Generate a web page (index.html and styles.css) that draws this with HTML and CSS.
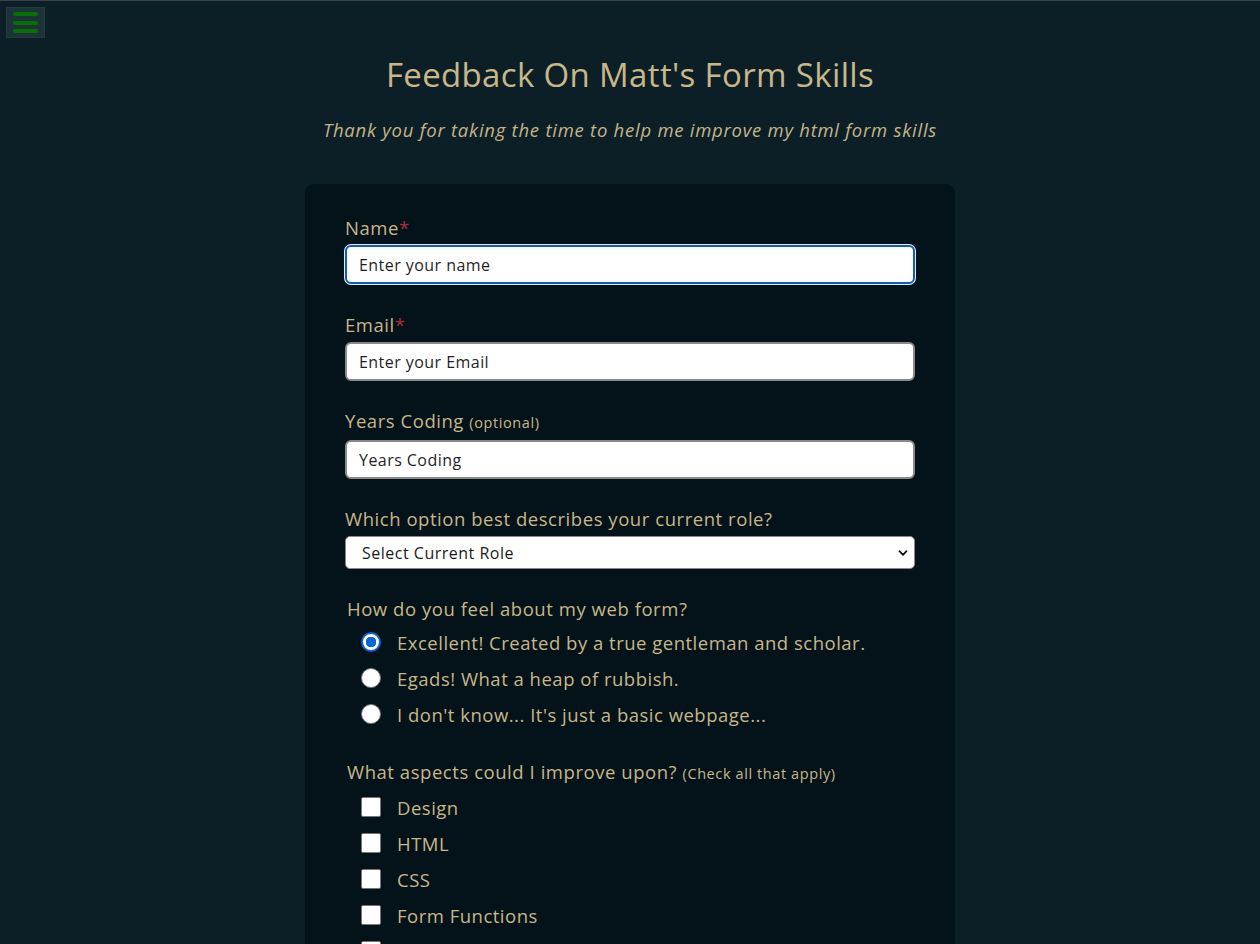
FILE: index.html
```html
<!DOCTYPE html>
<html lang="en">
<head>
<meta charset="utf-8">
<title>Feedback On Matt's Form Skills</title>
<link rel="stylesheet" href="styles.css">
</head>
<body>
<button class="menu-btn" aria-label="Menu">
  <span class="bar"></span><span class="bar"></span><span class="bar"></span>
</button>
<header class="page-head">
  <h1 class="title">Feedback On Matt's Form Skills</h1>
  <p class="subtitle">Thank you for taking the time to help me improve my html form skills</p>
</header>
<main class="card">
  <form class="form">
    <div class="field field-first">
      <label class="label" for="name">Name<span class="req">*</span></label>
      <input class="input input-focus" id="name" type="text" placeholder="Enter your name">
    </div>
    <div class="field">
      <label class="label" for="email">Email<span class="req">*</span></label>
      <input class="input" id="email" type="email" placeholder="Enter your Email">
    </div>
    <div class="field">
      <label class="label" for="years">Years Coding <span class="small">(optional)</span></label>
      <input class="input" id="years" type="number" placeholder="Years Coding">
    </div>
    <div class="field">
      <label class="label" for="role">Which option best describes your current role?</label>
      <div class="select" id="role">
        <span class="select-text">Select Current Role</span>
        <svg class="chev" width="10" height="8" viewBox="0 0 10 8"><path d="M1.5 2.2 L5 5.8 L8.5 2.2" fill="none" stroke="#111" stroke-width="1.8" stroke-linecap="round" stroke-linejoin="round"/></svg>
      </div>
    </div>
    <fieldset class="group">
      <legend class="legend">How do you feel about my web form?</legend>
      <label class="option"><span class="radio radio-on"></span><span class="opt-text">Excellent! Created by a true gentleman and scholar.</span></label>
      <label class="option"><span class="radio"></span><span class="opt-text">Egads! What a heap of rubbish.</span></label>
      <label class="option"><span class="radio"></span><span class="opt-text">I don't know... It's just a basic webpage...</span></label>
    </fieldset>
    <fieldset class="group">
      <legend class="legend">What aspects could I improve upon? <span class="small">(Check all that apply)</span></legend>
      <label class="option"><span class="check"></span><span class="opt-text">Design</span></label>
      <label class="option"><span class="check"></span><span class="opt-text">HTML</span></label>
      <label class="option"><span class="check"></span><span class="opt-text">CSS</span></label>
      <label class="option"><span class="check"></span><span class="opt-text">Form Functions</span></label>
      <label class="option"><span class="check"></span><span class="opt-text">Responsiveness</span></label>
    </fieldset>
  </form>
</main>
</body>
</html>
```

FILE: styles.css
```css
* { box-sizing: border-box; }
html, body { margin: 0; padding: 0; }
body {
  background: #0c1f27;
  border-top: 1px solid #3b4246;
  font-family: "Open Sans", "DejaVu Sans", sans-serif;
  color: #c5b488;
  min-height: 100vh;
}
.menu-btn {
  position: absolute;
  top: 7px;
  left: 6px;
  width: 39px;
  height: 31px;
  background: #1e3339;
  border: 1px solid #26393f;
  padding: 4px 6px;
  display: flex;
  flex-direction: column;
  justify-content: space-between;
  align-items: center;
}
.bar {
  display: block;
  width: 25px;
  height: 4px;
  background: #047304;
  border-radius: 2px;
}
.page-head {
  text-align: center;
  padding-top: 49px;
}
.title {
  margin: 0;
  font-size: 33px;
  letter-spacing: 0.35px;
  font-weight: 500;
  line-height: 50px;
  color: #c8b789;
}
.subtitle {
  margin: 17px 0 0;
  font-size: 18.5px;
  letter-spacing: 0.75px;
  font-style: italic;
  line-height: 26px;
  color: #c5b488;
}
.card {
  width: 650px;
  margin: 41px auto 0;
  background: #04131a;
  border-radius: 9px;
  padding: 30px 40px 40px;
}
.form { display: flex; flex-direction: column; }
.field {
  display: flex;
  flex-direction: column;
  gap: 4px;
  margin-bottom: 26px;
}
.field-first { margin-bottom: 27px; }
.label {
  font-size: 18.5px;
  letter-spacing: 0.55px;
  line-height: 27px;
  color: #c8b789;
}
.req { color: #b02a37; }
.small { font-size: 14.5px; letter-spacing: 0.6px; }
.input {
  height: 39px;
  border: 2px solid #8a8a8a;
  border-radius: 6px;
  background: #fff;
  padding: 0 12px;
  font-family: inherit;
  font-size: 16px;
  letter-spacing: 0.45px;
  color: #1a1a1a;
  outline: none;
}
.input::placeholder { color: #1f1f1f; opacity: 1; }
.input-focus {
  border-color: #0a5cc7;
  box-shadow: 0 0 0 1px #e8eef5;
}
.select {
  height: 33px;
  background: #fff;
  border: 1px solid #8a8a8a;
  border-radius: 5px;
  display: flex;
  align-items: center;
  justify-content: space-between;
  padding: 0 6px 0 16px;
  font-size: 16px;
  letter-spacing: 0.5px;
  color: #1a1a1a;
}
.group {
  border: none;
  margin: 0 0 26px;
  padding: 0 2px;
}
.legend {
  padding: 0;
  font-size: 18.5px;
  letter-spacing: 0.55px;
  line-height: 27px;
  margin-bottom: 2px;
  color: #c8b789;
}
.option {
  display: flex;
  align-items: center;
  height: 36px;
  gap: 16px;
  padding-left: 14px;
  font-size: 18.5px;
  letter-spacing: 0.5px;
  color: #c8b789;
}
.radio {
  width: 20px;
  height: 20px;
  border-radius: 50%;
  background: #fff;
  border: 1px solid #777;
  flex: none;
}
.radio-on {
  border: 2px solid #0a66d6;
  background: radial-gradient(circle, #0a66d6 0 5px, #fff 5.5px);
}
.check {
  width: 20px;
  height: 20px;
  background: #fff;
  border: 1px solid #777;
  border-radius: 2px;
  flex: none;
}
```
